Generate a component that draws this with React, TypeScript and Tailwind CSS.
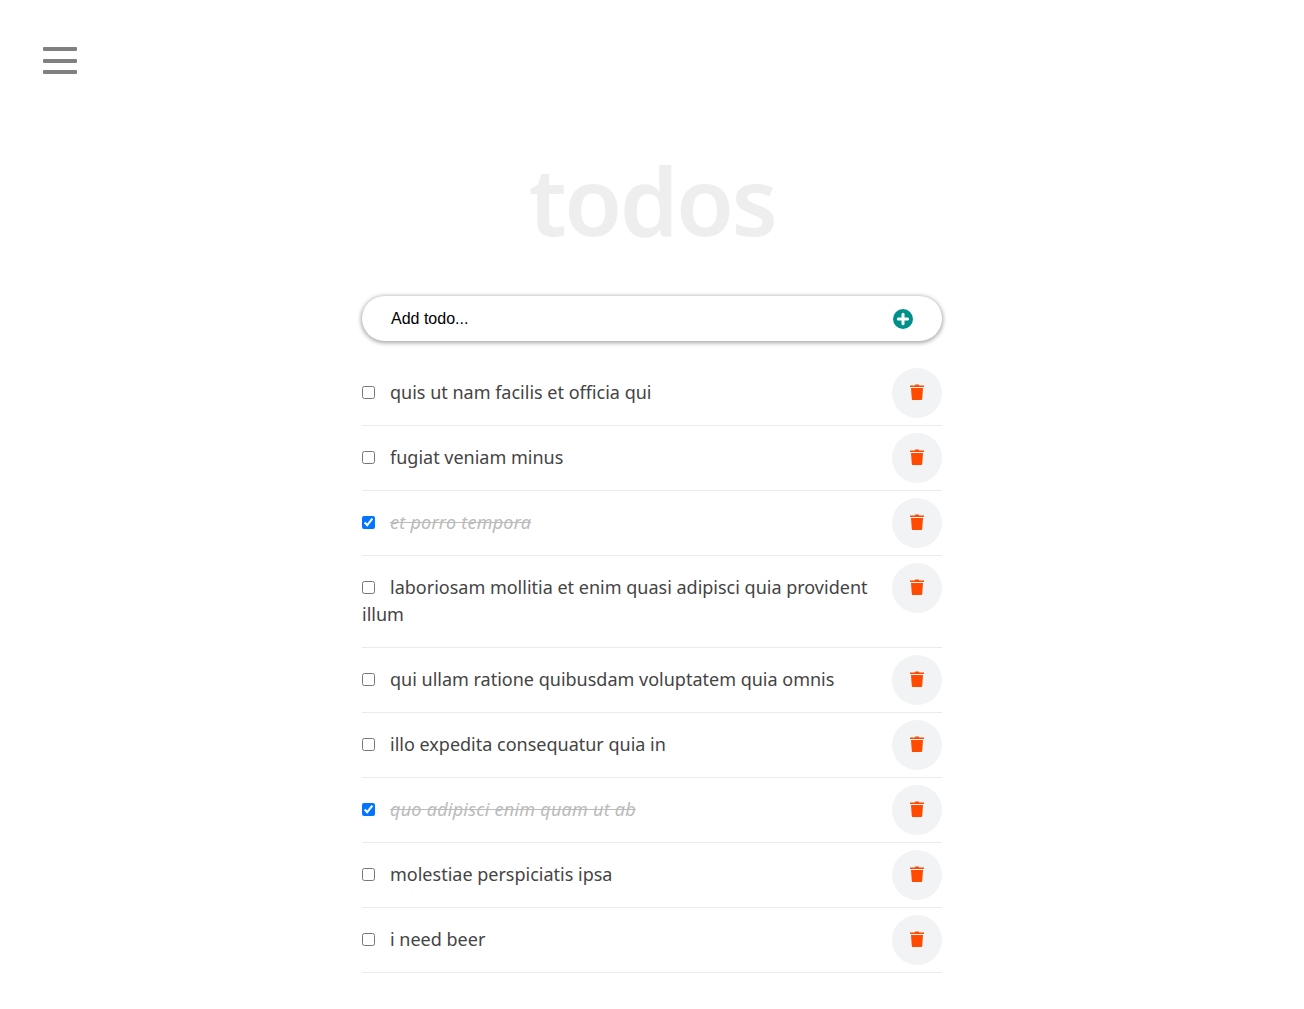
import { useState } from 'react'
import { Plus } from 'lucide-react'

interface Todo {
  id: number
  title: string
  completed: boolean
}

const initialTodos: Todo[] = [
  { id: 1, title: 'quis ut nam facilis et officia qui', completed: false },
  { id: 2, title: 'fugiat veniam minus', completed: false },
  { id: 3, title: 'et porro tempora', completed: true },
  { id: 4, title: 'laboriosam mollitia et enim quasi adipisci quia provident illum', completed: false },
  { id: 5, title: 'qui ullam ratione quibusdam voluptatem quia omnis', completed: false },
  { id: 6, title: 'illo expedita consequatur quia in', completed: false },
  { id: 7, title: 'quo adipisci enim quam ut ab', completed: true },
  { id: 8, title: 'molestiae perspiciatis ipsa', completed: false },
  { id: 9, title: 'i need beer', completed: false },
]

function TrashIcon() {
  return (
    <svg width="14" height="16" viewBox="0 0 14 16" className="mb-[2px]" fill="#ff4a00">
      <path d="M0 1.5h4.8L5.3.4h3.4l.5 1.1H14v1.6H0z" />
      <path d="M1 4h12l-.8 11.1c0 .5-.4.9-.9.9H2.700c-.5 0-.9-.4-.9-.9z" />
    </svg>
  )
}

export default function App() {
  const [todos, setTodos] = useState<Todo[]>(initialTodos)

  const toggle = (id: number) => {
    setTodos(prev => prev.map(t => (t.id === id ? { ...t, completed: !t.completed } : t)))
  }

  return (
    <div className="min-h-[1009px] bg-white font-['Noto_Sans','Open_Sans',sans-serif]">
      <div className="h-[120px] pl-[43px] pt-[47px]">
        <div className="flex w-[34px] flex-col gap-[7.500px]">
          <span className="h-[4px] rounded-[1px] bg-[#808080]" />
          <span className="h-[4px] rounded-[1px] bg-[#808080]" />
          <span className="h-[4px] rounded-[1px] bg-[#808080]" />
        </div>
      </div>

      <div className="mx-auto w-[580px]">
        <h1 className="mt-[15px] text-center text-[94px] leading-[130px] font-semibold tracking-[-2.500px] text-[#eeeeee]">todos</h1>

        <div className="mt-[31px] flex h-[45px] items-center justify-between rounded-[23px] bg-white px-[29px] shadow-[0_1px_4px_1px_rgba(0,0,0,0.35)]">
          <input
            placeholder="Add todo..."
            className="w-[400px] font-['Liberation_Sans',sans-serif] text-[16px] text-black outline-none placeholder:text-black"
          />
          <span className="flex h-[20px] w-[20px] items-center justify-center rounded-full bg-[#00908a]">
            <Plus size={16} strokeWidth={4.500} color="white" />
          </span>
        </div>

        <ul className="mt-[20px]">
          {todos.map(todo => (
            <li key={todo.id} className="flex justify-between border-b border-[#ebebeb] pt-[7px] pb-[4px]">
              <div className="w-[515px] pt-[11px] pb-[15px] text-[18px] leading-[27px] text-[#444444]">
                <input
                  type="checkbox"
                  checked={todo.completed}
                  onChange={() => toggle(todo.id)}
                  className="mr-[15px] inline-block h-[13px] w-[13px]"
                />
                <span className={todo.completed ? 'tracking-[0.250px] text-[#bbbbbb] italic line-through' : ''}>{todo.title}</span>
              </div>
              <button className="flex h-[50px] w-[50px] shrink-0 items-center justify-center rounded-full bg-[#f2f3f5]">
                <TrashIcon />
              </button>
            </li>
          ))}
        </ul>
      </div>
    </div>
  )
}
